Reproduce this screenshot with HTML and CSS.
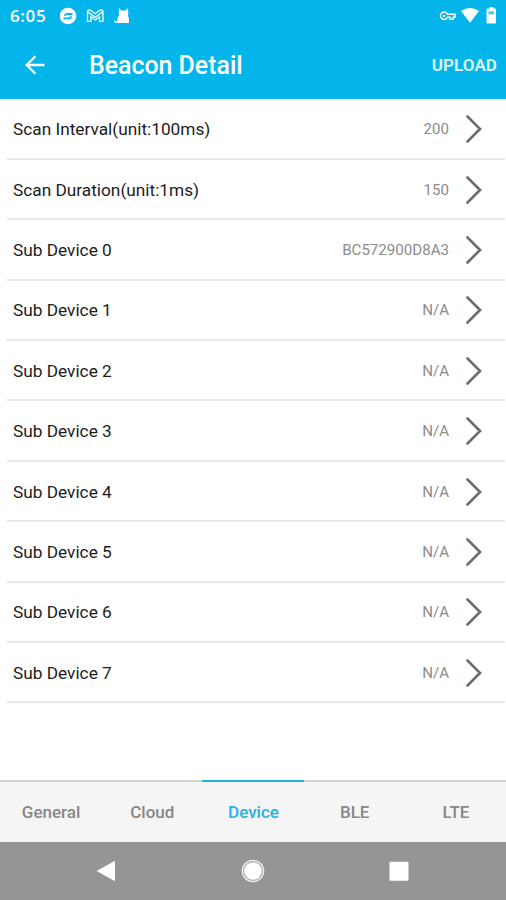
FILE: index.html
```html
<!DOCTYPE html>
<html lang="en">
<head>
    <meta charset="UTF-8">
    <meta name="viewport" content="width=device-width, initial-scale=1.0">
    <title>Beacon Detail</title>
    <link rel="stylesheet" href="styles.css">
</head>
<body>

    <header class="header">
        <div class="statusbar">
            <span class="clock">6:05</span>
            <svg class="notify" width="70" height="18" viewBox="0 0 70 18">
                <circle cx="8" cy="9" r="8.3" fill="#fff"/>
                <path d="M12.500 7H7.500a2 2 0 0 0-2.500 2M3.500 11.300h5a2 2 0 0 0 2.500-2" fill="none" stroke="#03b5ea" stroke-width="1.800"/>
                <path d="M27.500 14.300V4.800l7.700 5.600 7.700-5.600v9.500h-3.400V9.800l-4.300 3.200-4.300-3.200v4.500zM27.500 4.800c0-1.800 2-2.400 3.400-1.300l4.300 3.200 4.300-3.200c1.400-1.100 3.400-.5 3.400 1.300" fill="none" stroke="#fff" stroke-width="1.300"/>
                <path d="M59 1.200l2.300 2.300h4.200L67.800 1.200l.6 5-.4 2.300 1 3.500v4H56.500c-1.700 0-2.500-1.300-2.500-3 1 1.300 2 1.600 3.300 1.400 0-2.500.5-4.400 1.700-5.900l-.3-2.300z" fill="#fff"/>
            </svg>
            <svg class="system" width="60" height="18" viewBox="0 0 60 18">
                <path d="M8.600 7.200A3.700 3.700 0 1 0 8.600 10.200H11v2h3.200v-2H16V7.200z" fill="none" stroke="#fff" stroke-width="1.500"/>
                <circle cx="5.200" cy="8.700" r="1.200" fill="#fff"/>
                <path d="M22 4Q31 -2 40 4L31 15.700z" fill="#fff"/>
                <path d="M50.500 0h4v1.500h1.500q1 0 1 1V15.500q0 1-1 1h-7.500q-1 0-1-1V2.500q0-1 1-1h2z" fill="#fff"/>
                <path d="M49.500 4.300h5.500v3h-5.500z" fill="#45c7ef"/>
            </svg>
        </div>
        <div class="toolbar">
            <svg class="back" width="20" height="20" viewBox="0 0 20 20">
                <path d="M19.500 10H2M10.400 1.200L1.600 10l8.800 8.800" fill="none" stroke="#fff" stroke-width="2.300"/>
            </svg>
            <h1>Beacon Detail</h1>
            <button class="upload">UPLOAD</button>
        </div>
    </header>

    <ul class="list">
        <li><span>Scan Interval(unit:100ms)</span><em>200</em><svg class="arrow" viewBox="0 0 16 28"><path d="M1.500 1.500L14 14 1.500 26.500"/></svg></li>
        <li><span>Scan Duration(unit:1ms)</span><em>150</em><svg class="arrow" viewBox="0 0 16 28"><path d="M1.500 1.500L14 14 1.500 26.500"/></svg></li>
        <li><span>Sub Device 0</span><em>BC572900D8A3</em><svg class="arrow" viewBox="0 0 16 28"><path d="M1.500 1.500L14 14 1.500 26.500"/></svg></li>
        <li><span>Sub Device 1</span><em>N/A</em><svg class="arrow" viewBox="0 0 16 28"><path d="M1.500 1.500L14 14 1.500 26.500"/></svg></li>
        <li><span>Sub Device 2</span><em>N/A</em><svg class="arrow" viewBox="0 0 16 28"><path d="M1.500 1.500L14 14 1.500 26.500"/></svg></li>
        <li><span>Sub Device 3</span><em>N/A</em><svg class="arrow" viewBox="0 0 16 28"><path d="M1.500 1.500L14 14 1.500 26.500"/></svg></li>
        <li><span>Sub Device 4</span><em>N/A</em><svg class="arrow" viewBox="0 0 16 28"><path d="M1.500 1.500L14 14 1.500 26.500"/></svg></li>
        <li><span>Sub Device 5</span><em>N/A</em><svg class="arrow" viewBox="0 0 16 28"><path d="M1.500 1.500L14 14 1.500 26.500"/></svg></li>
        <li><span>Sub Device 6</span><em>N/A</em><svg class="arrow" viewBox="0 0 16 28"><path d="M1.500 1.500L14 14 1.500 26.500"/></svg></li>
        <li><span>Sub Device 7</span><em>N/A</em><svg class="arrow" viewBox="0 0 16 28"><path d="M1.500 1.500L14 14 1.500 26.500"/></svg></li>
    </ul>

    <nav class="tabs">
        <a>General</a>
        <a>Cloud</a>
        <a class="active">Device</a>
        <a>BLE</a>
        <a>LTE</a>
    </nav>

    <div class="navbar">
        <svg width="20" height="24" viewBox="0 0 20 24"><path d="M1.500 12L18.500 2.500v19z" fill="#fff" stroke="#fff" stroke-linejoin="round"/></svg>
        <svg width="24" height="24" viewBox="0 0 24 24">
            <circle cx="12" cy="12" r="10.700" fill="#aaa" stroke="#eee" stroke-width="1.300"/>
            <circle cx="12" cy="12" r="8.800" fill="#fff"/>
        </svg>
        <svg width="20" height="24" viewBox="0 0 20 24"><rect x=".5" y="2.700" width="19" height="19" rx="1" fill="#fff"/></svg>
    </div>

</body>
</html>
```
FILE: styles.css
```css
body {
    margin: 0;
    height: 900px;
    display: flex;
    flex-direction: column;
    font-family: Roboto, "Liberation Sans", sans-serif;
    background: #fff;
    overflow: hidden;
}

.header {
    height: 98.5px;
    background: #03b5ea;
    color: #fff;
}

.statusbar {
    height: 32px;
    display: flex;
    align-items: center;
    padding: 0 7px 0 10px;
}

.clock {
    width: 50px;
    font-family: "Open Sans", sans-serif;
    font-size: 17px;
    font-weight: 600;
    letter-spacing: 0.6px;
    line-height: 32px;
}

.system {
    margin-left: auto;
}

.toolbar {
    height: 66px;
    display: flex;
    align-items: center;
    padding: 0 9px 0 25px;
}

.toolbar h1 {
    margin: 0 0 0 44px;
    font-size: 24.9px;
    font-weight: 500;
}

.upload {
    margin-left: auto;
    padding: 0;
    border: none;
    background: none;
    color: #e2f8ff;
    font-family: inherit;
    font-size: 17px;
    font-weight: 600;
    letter-spacing: 0.1px;
}

.list {
    flex: 1;
    margin: 0;
    padding: 1px 1px 0 7px;
    list-style: none;
}

.list li {
    box-sizing: border-box;
    height: 60.4px;
    display: flex;
    align-items: center;
    padding: 1px 23px 0 6px;
    border-bottom: 2px solid #e8e8e8;
}

.list span {
    font-size: 17.25px;
    color: #1c1c1c;
}

.list em {
    margin-left: auto;
    font-style: normal;
    font-size: 15.1px;
    color: #8c8c8c;
}

.arrow {
    width: 16px;
    height: 28px;
    margin-left: 17px;
    fill: none;
    stroke: #6b6f72;
    stroke-width: 2.7;
    stroke-linecap: round;
}

.tabs {
    height: 62px;
    display: flex;
    background: #f5f5f5;
}

.tabs a {
    flex: 1;
    border-top: 2px solid #d3d5d5;
    line-height: 60px;
    text-align: center;
    text-indent: 1px;
    font-size: 17px;
    font-weight: 500;
    color: #878787;
}

.tabs .active {
    border-color: #1fb3e3;
    color: #1fb3e3;
}

.navbar {
    height: 58px;
    display: flex;
    align-items: center;
    justify-content: space-between;
    box-sizing: border-box;
    padding: 0 97px 0 96px;
    background: #959595;
}
```
